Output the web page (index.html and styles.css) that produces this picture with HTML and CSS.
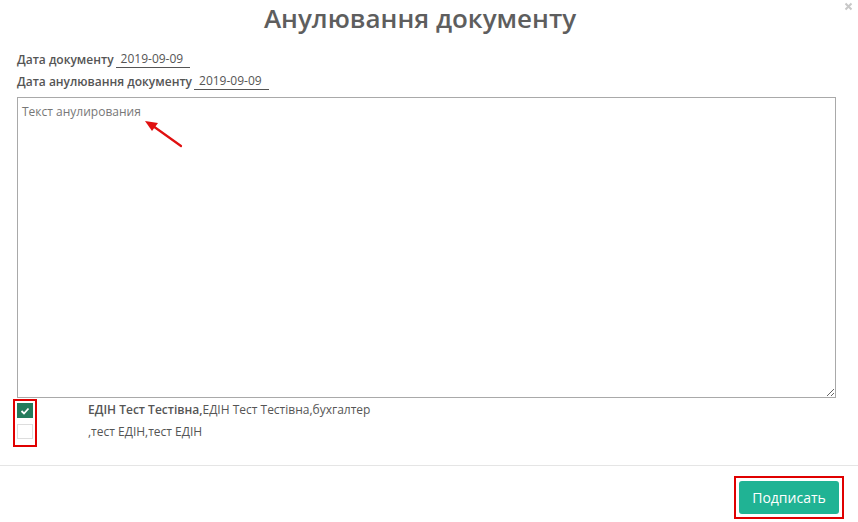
FILE: index.html
```html
<!DOCTYPE html>
<html>
<head>
<meta charset="utf-8">
<link rel="stylesheet" href="styles.css">
</head>
<body>
<div class="modal">
  <div class="header">
    <h1 class="title">Анулювання документу</h1>
    <svg class="close" width="9" height="9" viewBox="0 0 9 9" aria-label="Закрити"><path d="M1.5 1.5 L7.5 7.5 M7.5 1.5 L1.5 7.5" stroke="#c8c8c8" stroke-width="2"/></svg>
  </div>
  <div class="body">
    <div class="field"><span class="label">Дата документу</span><span class="value">2019-09-09</span></div>
    <div class="field"><span class="label">Дата анулювання документу</span><span class="value">2019-09-09</span></div>
    <div class="area-wrap">
      <textarea class="area" placeholder="Текст анулирования"></textarea>
      <svg class="arrow" width="50" height="40" viewBox="0 0 50 40">
        <line x1="36" y1="25" x2="8" y2="5" stroke="#e01010" stroke-width="2.2" stroke-linecap="round"/>
        <polygon points="0,0 13,2 7,10" fill="#e01010"/>
      </svg>
    </div>
    <div class="signers">
      <div class="checks">
        <span class="cb checked"><svg width="10" height="8" viewBox="0 0 10 8"><polyline points="1.5,4 4,6.5 8.5,1.5" fill="none" stroke="#fff" stroke-width="1.8"/></svg></span>
        <span class="cb"></span>
      </div>
      <div class="names">
        <div class="name"><b>ЕДІН Тест Тестівна,</b>ЕДІН Тест Тестівна,бухгалтер</div>
        <div class="name">,тест ЕДІН,тест ЕДІН</div>
      </div>
    </div>
  </div>
  <div class="footer">
    <span class="btn-frame"><button class="btn">Подписать</button></span>
  </div>
</div>
</body>
</html>
```
FILE: styles.css
```css
* { box-sizing: border-box; }
html, body { margin: 0; padding: 0; background: #fff; }
body { font-family: "Open Sans", "Noto Sans", sans-serif; color: #555; width: 858px; height: 522px; overflow: hidden; }
.modal { width: 858px; }
.header { position: relative; height: 42px; }
.title { margin: 0; text-align: center; font-size: 26px; font-weight: 600; color: #5e5e5e; line-height: 36px; padding-right: 18px; }
.close { position: absolute; right: 5px; top: 2px; }
.body { padding: 7px 23px 0 17px; }
.field { font-size: 12px; line-height: 22px; height: 22px; display: flex; }
.label { font-weight: 600; color: #555; }
.value { border-bottom: 1px solid #555; padding: 0 7px 0 5px; margin-left: 2px; height: 18px; line-height: 17px; color: #555; margin-top: 1px; }
.area-wrap { position: relative; margin-top: 4px; }
.area { display: block; width: 819px; height: 301px; border: 1px solid #a9a9a9; resize: both; font-family: "Open Sans", sans-serif; font-size: 12px; padding: 5px 4px; margin: 0; color: #555; }
.area::placeholder { color: #777; }
.arrow { position: absolute; left: 128px; top: 24px; }
.signers { display: flex; margin-top: 1px; }
.checks { border: 2px solid #e00000; padding: 2px; margin-left: -4px; display: flex; flex-direction: column; gap: 6px; width: 24px; height: 48px; }
.cb { width: 16px; height: 15px; border: 1px solid #ddd; display: flex; align-items: center; justify-content: center; background: #fff; }
.cb.checked { background: #247b5c; border-color: #247b5c; }
.names { margin-left: 51px; font-size: 12px; line-height: 22px; margin-top: 0; }
.name b { font-weight: 600; }
.footer { border-top: 1px solid #e5e5e5; margin-top: 18px; height: 58px; display: flex; justify-content: flex-end; align-items: flex-start; padding: 10px 14px 0 0; }
.btn-frame { border: 2px solid #e00000; padding: 3px; display: inline-block; }
.btn { display: block; width: 100px; height: 33px; background: #20b394; border: none; border-radius: 3px; color: #fff; font-family: "Open Sans", sans-serif; font-size: 14px; padding: 0; }
```
